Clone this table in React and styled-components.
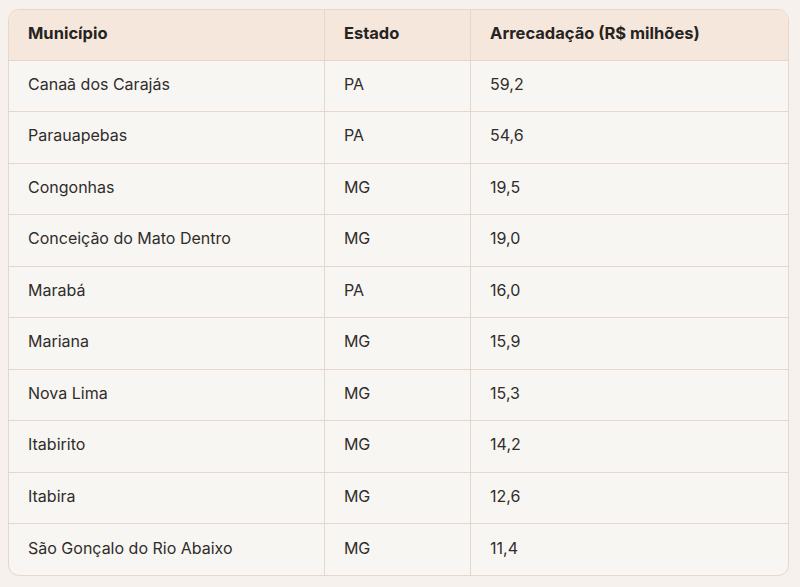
import React from "react";
import styled, { createGlobalStyle } from "styled-components";

const Global = createGlobalStyle`
  html, body { margin: 0; padding: 0; background: #f6f1ec; }
  body { font-family: Inter, "Noto Sans", sans-serif; color: #2b2a28; }
`;

const Page = styled.div`
  padding: 9px 0 0 8px;
`;

const Frame = styled.div`
  width: 781px;
  border: 1.5px solid #e7d6ca;
  border-radius: 11px;
  overflow: hidden;
  background: #f8f6f3;
  box-sizing: border-box;
`;

const Table = styled.table`
  width: 100%;
  border-collapse: collapse;
  table-layout: fixed;
`;

const Col = styled.col`
  width: ${(p) => p.$w}px;
`;

const Head = styled.th`
  background: #f6e7dc;
  height: 50px;
  padding: 0 0 3px 19px;
  box-sizing: border-box;
  text-align: left;
  font-weight: 700;
  font-size: 16.5px;
  color: #262422;
  border-bottom: 1.5px solid #e7d6ca;
  border-left: ${(p) => (p.$first ? "none" : "1.5px solid #e7d6ca")};
`;

const Cell = styled.td`
  height: 51.5px;
  box-sizing: border-box;
  padding: 0 0 4px 19px;
  font-size: 16px;
  font-weight: 400;
  color: #2f2d2b;
  border-top: ${(p) => (p.$firstRow ? "none" : "1.5px solid #e7d6ca")};
  border-left: ${(p) => (p.$first ? "none" : "1.5px solid #e7d6ca")};
`;

const rows = [
  ["Canaã dos Carajás", "PA", "59,2"],
  ["Parauapebas", "PA", "54,6"],
  ["Congonhas", "MG", "19,5"],
  ["Conceição do Mato Dentro", "MG", "19,0"],
  ["Marabá", "PA", "16,0"],
  ["Mariana", "MG", "15,9"],
  ["Nova Lima", "MG", "15,3"],
  ["Itabirito", "MG", "14,2"],
  ["Itabira", "MG", "12,6"],
  ["São Gonçalo do Rio Abaixo", "MG", "11,4"],
];

export default function App() {
  return (
    <Page>
      <Global />
      <Frame>
        <Table>
          <colgroup>
            <Col $w={315} />
            <Col $w={146} />
            <Col $w={317} />
          </colgroup>
          <thead>
            <tr>
              <Head $first>Município</Head>
              <Head>Estado</Head>
              <Head>Arrecadação (R$ milhões)</Head>
            </tr>
          </thead>
          <tbody>
            {rows.map((r, i) => (
              <tr key={i}>
                <Cell $first $firstRow={i === 0}>{r[0]}</Cell>
                <Cell $firstRow={i === 0}>{r[1]}</Cell>
                <Cell $firstRow={i === 0}>{r[2]}</Cell>
              </tr>
            ))}
          </tbody>
        </Table>
      </Frame>
    </Page>
  );
}
